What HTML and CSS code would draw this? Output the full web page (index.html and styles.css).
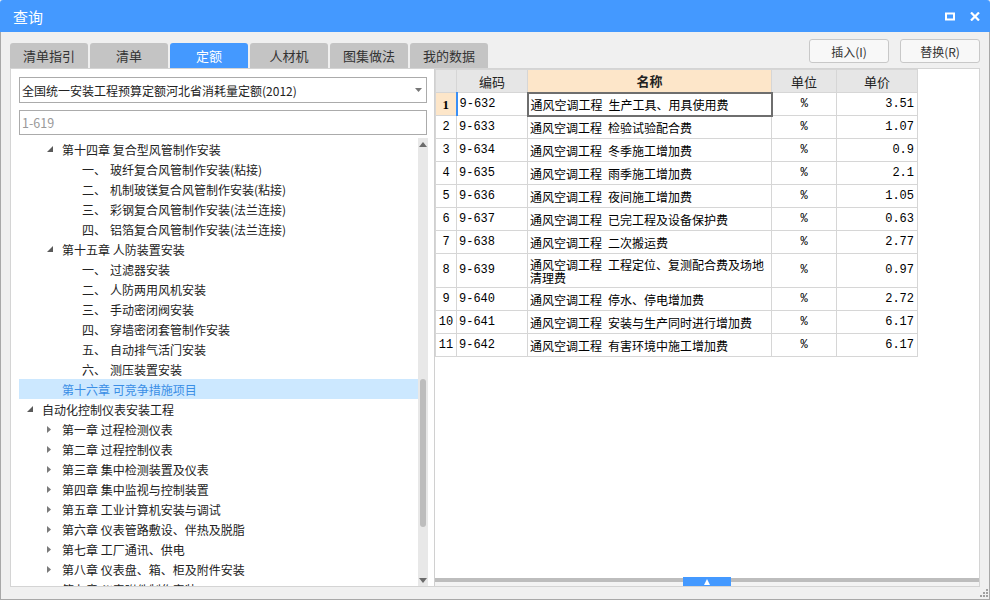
FILE: index.html
```html
<!DOCTYPE html>
<html lang="zh-CN">
<head>
<meta charset="utf-8">
<title>查询</title>
<link rel="stylesheet" href="styles.css">
</head>
<body>
<div class="window">
  <div class="titlebar">
    <span class="title">查询</span>
    <div class="winbtns">
      <svg class="wbtn" width="10" height="9" viewBox="0 0 10 9"><rect x="1" y="1.5" width="8" height="6" fill="none" stroke="#fff" stroke-width="2"/></svg>
      <svg class="wbtn" width="10" height="9" viewBox="0 0 10 9"><path d="M1 0.5 L9 8.5 M9 0.5 L1 8.5" stroke="#fff" stroke-width="2.2"/></svg>
    </div>
  </div>
  <div class="main">
    <div class="toolbar">
      <div class="tabs">
        <div class="tab">清单指引</div>
        <div class="tab">清单</div>
        <div class="tab active">定额</div>
        <div class="tab">人材机</div>
        <div class="tab">图集做法</div>
        <div class="tab">我的数据</div>
      </div>
      <div class="actions">
        <div class="btn">插入(I)</div>
        <div class="btn">替换(R)</div>
      </div>
    </div>
    <div class="content">
      <div class="left">
        <div class="select">
          <span>全国统一安装工程预算定额河北省消耗量定额(2012)</span>
          <svg width="7" height="4" viewBox="0 0 7 4"><polygon points="0,0 7,0 3.5,4" fill="#777"/></svg>
        </div>
        <div class="search">1-619</div>
        <div class="treewrap">
          <div class="tree">
            <div class="row l2"><span class="arr"><svg width="6" height="6" viewBox="0 0 6 6"><polygon points="6,0 6,6 0,6" fill="#5a5a5a"/></svg></span><span>第十四章 复合型风管制作安装</span></div>
            <div class="row l3"><span class="arr"></span><span class="num">一、</span><span>玻纤复合风管制作安装(粘接)</span></div>
            <div class="row l3"><span class="arr"></span><span class="num">二、</span><span>机制玻镁复合风管制作安装(粘接)</span></div>
            <div class="row l3"><span class="arr"></span><span class="num">三、</span><span>彩钢复合风管制作安装(法兰连接)</span></div>
            <div class="row l3"><span class="arr"></span><span class="num">四、</span><span>铝箔复合风管制作安装(法兰连接)</span></div>
            <div class="row l2"><span class="arr"><svg width="6" height="6" viewBox="0 0 6 6"><polygon points="6,0 6,6 0,6" fill="#5a5a5a"/></svg></span><span>第十五章 人防装置安装</span></div>
            <div class="row l3"><span class="arr"></span><span class="num">一、</span><span>过滤器安装</span></div>
            <div class="row l3"><span class="arr"></span><span class="num">二、</span><span>人防两用风机安装</span></div>
            <div class="row l3"><span class="arr"></span><span class="num">三、</span><span>手动密闭阀安装</span></div>
            <div class="row l3"><span class="arr"></span><span class="num">四、</span><span>穿墙密闭套管制作安装</span></div>
            <div class="row l3"><span class="arr"></span><span class="num">五、</span><span>自动排气活门安装</span></div>
            <div class="row l3"><span class="arr"></span><span class="num">六、</span><span>测压装置安装</span></div>
            <div class="row l2 sel"><span class="arr"></span><span>第十六章 可竞争措施项目</span></div>
            <div class="row l1"><span class="arr"><svg width="6" height="6" viewBox="0 0 6 6"><polygon points="6,0 6,6 0,6" fill="#5a5a5a"/></svg></span><span>自动化控制仪表安装工程</span></div>
            <div class="row l2"><span class="arr"><svg width="4" height="7" viewBox="0 0 4 7"><polygon points="0,0 4,3.5 0,7" fill="#7a7a7a"/></svg></span><span>第一章 过程检测仪表</span></div>
            <div class="row l2"><span class="arr"><svg width="4" height="7" viewBox="0 0 4 7"><polygon points="0,0 4,3.5 0,7" fill="#7a7a7a"/></svg></span><span>第二章 过程控制仪表</span></div>
            <div class="row l2"><span class="arr"><svg width="4" height="7" viewBox="0 0 4 7"><polygon points="0,0 4,3.5 0,7" fill="#7a7a7a"/></svg></span><span>第三章 集中检测装置及仪表</span></div>
            <div class="row l2"><span class="arr"><svg width="4" height="7" viewBox="0 0 4 7"><polygon points="0,0 4,3.5 0,7" fill="#7a7a7a"/></svg></span><span>第四章 集中监视与控制装置</span></div>
            <div class="row l2"><span class="arr"><svg width="4" height="7" viewBox="0 0 4 7"><polygon points="0,0 4,3.5 0,7" fill="#7a7a7a"/></svg></span><span>第五章 工业计算机安装与调试</span></div>
            <div class="row l2"><span class="arr"><svg width="4" height="7" viewBox="0 0 4 7"><polygon points="0,0 4,3.5 0,7" fill="#7a7a7a"/></svg></span><span>第六章 仪表管路敷设、伴热及脱脂</span></div>
            <div class="row l2"><span class="arr"><svg width="4" height="7" viewBox="0 0 4 7"><polygon points="0,0 4,3.5 0,7" fill="#7a7a7a"/></svg></span><span>第七章 工厂通讯、供电</span></div>
            <div class="row l2"><span class="arr"><svg width="4" height="7" viewBox="0 0 4 7"><polygon points="0,0 4,3.5 0,7" fill="#7a7a7a"/></svg></span><span>第八章 仪表盘、箱、柜及附件安装</span></div>
            <div class="row l2"><span class="arr"><svg width="4" height="7" viewBox="0 0 4 7"><polygon points="0,0 4,3.5 0,7" fill="#7a7a7a"/></svg></span><span>第九章 仪表附件制作安装</span></div>
          </div>
          <div class="vscroll">
            <svg class="sarrow" width="8" height="5" viewBox="0 0 8 5"><polygon points="0,5 8,5 4,0" fill="#6b6b6b"/></svg>
            <div class="thumb"></div>
            <svg class="sarrow" width="8" height="5" viewBox="0 0 8 5"><polygon points="0,0 8,0 4,5" fill="#6b6b6b"/></svg>
          </div>
        </div>
      </div>
      <div class="right">
        <table class="grid">
          <colgroup><col class="c-no"><col class="c-code"><col class="c-name"><col class="c-unit"><col class="c-price"></colgroup>
          <thead>
            <tr><th class="hno"></th><th>编码</th><th class="hname">名称</th><th>单位</th><th>单价</th></tr>
          </thead>
          <tbody>
            <tr class="cur"><td class="no">1</td><td class="code">9-632</td><td class="name">通风空调工程&ensp;生产工具、用具使用费</td><td class="unit">%</td><td class="price">3.51</td></tr>
            <tr><td class="no">2</td><td class="code">9-633</td><td class="name">通风空调工程&ensp;检验试验配合费</td><td class="unit">%</td><td class="price">1.07</td></tr>
            <tr><td class="no">3</td><td class="code">9-634</td><td class="name">通风空调工程&ensp;冬季施工增加费</td><td class="unit">%</td><td class="price">0.9</td></tr>
            <tr><td class="no">4</td><td class="code">9-635</td><td class="name">通风空调工程&ensp;雨季施工增加费</td><td class="unit">%</td><td class="price">2.1</td></tr>
            <tr><td class="no">5</td><td class="code">9-636</td><td class="name">通风空调工程&ensp;夜间施工增加费</td><td class="unit">%</td><td class="price">1.05</td></tr>
            <tr><td class="no">6</td><td class="code">9-637</td><td class="name">通风空调工程&ensp;已完工程及设备保护费</td><td class="unit">%</td><td class="price">0.63</td></tr>
            <tr><td class="no">7</td><td class="code">9-638</td><td class="name">通风空调工程&ensp;二次搬运费</td><td class="unit">%</td><td class="price">2.77</td></tr>
            <tr class="tall"><td class="no">8</td><td class="code">9-639</td><td class="name">通风空调工程&ensp;工程定位、复测配合费及场地清理费</td><td class="unit">%</td><td class="price">0.97</td></tr>
            <tr><td class="no">9</td><td class="code">9-640</td><td class="name">通风空调工程&ensp;停水、停电增加费</td><td class="unit">%</td><td class="price">2.72</td></tr>
            <tr><td class="no">10</td><td class="code">9-641</td><td class="name">通风空调工程&ensp;安装与生产同时进行增加费</td><td class="unit">%</td><td class="price">6.17</td></tr>
            <tr><td class="no">11</td><td class="code">9-642</td><td class="name">通风空调工程&ensp;有害环境中施工增加费</td><td class="unit">%</td><td class="price">6.17</td></tr>
          </tbody>
        </table>
        <div class="spacer"></div>
        <div class="hbar"><div class="handle"><svg width="6" height="6" viewBox="0 0 6 6"><polygon points="0,6 6,6 3,0" fill="#fff"/></svg></div></div>
      </div>
    </div>
  </div>
  <svg class="grip" width="8" height="8" viewBox="0 0 8 8"><rect x="6" y="0" width="2" height="2" fill="#a0a0a0"/><rect x="3" y="3" width="2" height="2" fill="#a0a0a0"/><rect x="6" y="3" width="2" height="2" fill="#a0a0a0"/><rect x="0" y="6" width="2" height="2" fill="#a0a0a0"/><rect x="3" y="6" width="2" height="2" fill="#a0a0a0"/><rect x="6" y="6" width="2" height="2" fill="#a0a0a0"/></svg>
</div>
</body>
</html>
```
FILE: styles.css
```css
* { box-sizing: border-box; }
html, body { margin: 0; padding: 0; }
body {
  width: 990px; height: 600px; overflow: hidden;
  font-family: "Noto Sans CJK SC", sans-serif;
  font-size: 12px; color: #222; background: #fff;
}
.window {
  position: relative;
  width: 990px; height: 600px;
  display: flex; flex-direction: column;
  background: #f0f0f0;
}
.titlebar {
  height: 32px; flex: none;
  background: #4499ff;
  border-radius: 3px 3px 0 0;
  display: flex; align-items: center; justify-content: space-between;
  padding: 0 10px 0 13px;
  color: #fff;
}
.title { font-size: 15px; }
.winbtns { display: flex; gap: 15px; align-items: center; }
.wbtn { display: block; }
.main {
  flex: 1; min-height: 0;
  display: flex; flex-direction: column;
  border: 1px solid #a8a8a8; border-top: none;
  padding: 0 9px 12px 9px;
}
.toolbar { height: 36px; flex: none; display: flex; justify-content: space-between; }
.tabs { display: flex; gap: 2px; align-items: flex-end; }
.tab {
  width: 78px; height: 25px;
  background: #c4c4c4; border-radius: 3px 3px 0 0;
  display: flex; align-items: center; justify-content: center;
  font-size: 13px; color: #333;
}
.tab.active { background: #4499ff; color: #fff; }
.actions { display: flex; gap: 11px; padding-top: 7px; }
.btn {
  width: 80px; height: 24px;
  border: 1px solid #c8c8c8; border-radius: 3px;
  background: #f8f8f8;
  display: flex; align-items: center; justify-content: center;
  color: #333;
}
.content {
  flex: 1; min-height: 0;
  display: flex; gap: 6px;
  background: #fff; border: 1px solid #d4d4d4;
}
.left { width: 417px; flex: none; display: flex; flex-direction: column; padding: 8px 0 0 8px; }
.select {
  height: 26px; width: 408px; flex: none;
  border: 1px solid #ababab;
  display: flex; align-items: center; justify-content: space-between;
  padding: 0 4px 0 2px;
}
.search {
  height: 25px; width: 408px; flex: none; margin-top: 7px;
  border: 1px solid #ababab;
  display: flex; align-items: center; padding: 0 2px;
  color: #999; font-size: 12.5px;
}
.treewrap { flex: 1; min-height: 0; margin-top: 3px; display: flex; }
.tree { flex: 1; overflow: hidden; padding-top: 1px; }
.row { height: 20px; display: flex; align-items: center; white-space: nowrap; color: #222; }
.row.l1 { padding-left: 8px; }
.row.l2 { padding-left: 28px; }
.row.l3 { padding-left: 48px; }
.arr { width: 15px; flex: none; display: flex; align-items: center; }
.arr svg { display: block; }
.row.l2 .arr svg[width="4"] { margin-left: 0; }
.num { width: 28px; flex: none; }
.row.sel { background: #cce8ff; color: #3a8ee6; }
.vscroll {
  width: 10px; flex: none; background: #e8e8e8;
  position: relative;
  display: flex; flex-direction: column; align-items: center; justify-content: space-between;
  padding: 4px 0 3px;
}
.sarrow { display: block; }
.thumb {
  position: absolute; left: 2px; top: 241px;
  width: 6px; height: 148px; border-radius: 3px;
  background: #bdbdbd;
}
.right {
  flex: 1; min-width: 0;
  border-left: 1px solid #d0d0d0;
  display: flex; flex-direction: column;
}
.grid {
  border-collapse: collapse; table-layout: fixed;
  width: 482px;
  border-left: 1px solid #9c9c9c;
}
.c-no { width: 21px; }
.c-code { width: 71px; }
.c-name { width: 244px; }
.c-unit { width: 65px; }
.c-price { width: 81px; }
.grid th, .grid td { border: 1px solid #d6d6d6; padding: 0; }
.grid thead tr { height: 23px; }
.grid th {
  background: #e6e6e6; font-weight: normal; font-size: 13px; color: #222;
  text-align: center;
}
.grid th.hname { background: #fde6c9; font-weight: bold; }
.grid tbody tr { height: 23px; }
.grid tbody tr.tall { height: 34px; }
.grid td { font-size: 12px; line-height: 13px; color: #000; }
.no { text-align: center; font-family: "Liberation Mono", monospace; font-size: 11.5px; }
.cur .no { background: #fde6c9; font-weight: bold; font-family: "Liberation Serif", serif; font-size: 13px; }
.code { font-family: "Liberation Mono", monospace; font-size: 11px; padding-left: 2px !important; }
.cur .code { border-left: 2px solid #3a8ff5; }
.name { padding-left: 2px !important; }
.cur .name { border: 2px solid #6e6e6e; }
.unit { text-align: center; font-family: "Liberation Mono", monospace; font-size: 10px; }
.price { text-align: right; font-family: "Liberation Mono", monospace; font-size: 11px; padding-right: 3px !important; }
.spacer { flex: 1; }
.hbar {
  height: 8px; flex: none;
  display: flex; justify-content: center;
  background: linear-gradient(#bdbdbd 0 4px, #f3f3f3 4px);
}
.handle {
  width: 48px; height: 9px; margin-top: -1px;
  background: #4499ff;
  display: flex; align-items: center; justify-content: center;
}
.handle svg { display: block; }
.grip { position: absolute; right: 2px; bottom: 3px; }
```
